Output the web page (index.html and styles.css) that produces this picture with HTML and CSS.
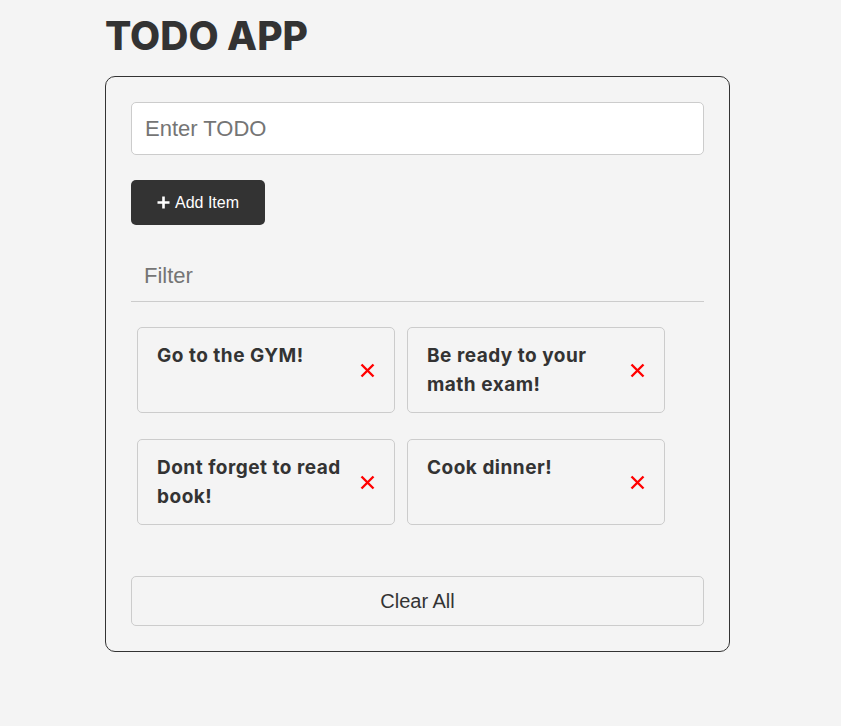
FILE: index.html
```html
<!DOCTYPE html>
<html lang="en">
<head>
<meta charset="UTF-8">
<title>Todo App</title>
<link rel="stylesheet" href="styles.css">
</head>
<body>
<div class="wrap">
  <h1 class="title">TODO APP</h1>
  <div class="panel">
    <input class="item-input" type="text" placeholder="Enter TODO">
    <button class="add-btn" type="button">
      <svg class="plus" viewBox="0 0 13 13" width="13" height="13"><path d="M6.5 0.5V12.5M0.5 6.5H12.5" stroke="#fff" stroke-width="2.6" fill="none"/></svg>
      <span>Add Item</span>
    </button>
    <input class="filter" type="text" placeholder="Filter">
    <ul class="items">
      <li class="item"><span class="item-text">Go to the GYM!</span><svg class="remove" viewBox="0 0 15 15" width="15" height="15"><path d="M1.5 1.5L13.5 13.5M13.5 1.5L1.5 13.5" stroke="#ff0000" stroke-width="2.4" fill="none"/></svg></li>
      <li class="item"><span class="item-text">Be ready to your math exam!</span><svg class="remove" viewBox="0 0 15 15" width="15" height="15"><path d="M1.5 1.5L13.5 13.5M13.5 1.5L1.5 13.5" stroke="#ff0000" stroke-width="2.4" fill="none"/></svg></li>
      <li class="item"><span class="item-text">Dont forget to read book!</span><svg class="remove" viewBox="0 0 15 15" width="15" height="15"><path d="M1.5 1.5L13.5 13.5M13.5 1.5L1.5 13.5" stroke="#ff0000" stroke-width="2.4" fill="none"/></svg></li>
      <li class="item"><span class="item-text">Cook dinner!</span><svg class="remove" viewBox="0 0 15 15" width="15" height="15"><path d="M1.5 1.5L13.5 13.5M13.5 1.5L1.5 13.5" stroke="#ff0000" stroke-width="2.4" fill="none"/></svg></li>
    </ul>
    <button class="clear-btn" type="button">Clear All</button>
  </div>
</div>
</body>
</html>
```
FILE: styles.css
```css
* { box-sizing: border-box; }
html, body { margin: 0; padding: 0; }
body {
  background: #f4f4f4;
  color: #333;
  font-family: "Liberation Sans", Arial, sans-serif;
}
.wrap {
  width: 625px;
  margin-left: 105px;
  padding-top: 14px;
}
.title {
  margin: 0 0 18px 0;
  font-family: Inter, "Noto Sans", sans-serif;
  font-weight: 800;
  font-size: 39px;
  line-height: 44px;
  color: #333;
  letter-spacing: 0px;
}
.panel {
  border: 1px solid #333;
  border-radius: 10px;
  padding: 25px;
  display: flex;
  flex-direction: column;
  align-items: flex-start;
}
.item-input {
  width: 100%;
  height: 53px;
  border: 1px solid #ccc;
  border-radius: 5px;
  background: #fff;
  font-family: "Liberation Sans", Arial, sans-serif;
  font-size: 22px;
  padding: 0 13px;
  color: #333;
  outline: none;
}
.item-input::placeholder, .filter::placeholder { color: #757575; }
.add-btn {
  margin-top: 25px;
  width: 134px;
  height: 45px;
  background: #333;
  color: #fff;
  border: none;
  border-radius: 5px;
  font-family: "Liberation Sans", Arial, sans-serif;
  font-size: 16px;
  display: flex;
  align-items: center;
  justify-content: center;
  gap: 5px;
  padding: 0;
}
.plus { display: block; }
.filter {
  margin-top: 25px;
  width: 100%;
  height: 52px;
  border: none;
  border-bottom: 1px solid #ccc;
  background: transparent;
  font-family: "Liberation Sans", Arial, sans-serif;
  font-size: 22px;
  padding: 0 13px;
  outline: none;
}
.items {
  list-style: none;
  margin: 19px 0 0 0;
  padding: 0;
  width: 100%;
  display: flex;
  flex-wrap: wrap;
}
.item {
  width: 258px;
  margin: 6px 6px 20px 6px;
  border: 1px solid #ccc;
  border-radius: 5px;
  padding: 13px 19px 13px 19px;
  display: flex;
  justify-content: space-between;
  align-items: center;
  gap: 10px;
  min-height: 86px;
}
.item-text {
  align-self: flex-start;
  font-family: Inter, "Noto Sans", sans-serif;
  font-weight: 700;
  font-size: 19px;
  line-height: 29px;
  letter-spacing: 0.5px;
  color: #333;
}
.remove { flex: none; display: block; }
.clear-btn {
  margin-top: 31px;
  width: 100%;
  height: 50px;
  border: 1px solid #ccc;
  border-radius: 5px;
  background: transparent;
  color: #333;
  font-family: "Liberation Sans", Arial, sans-serif;
  font-size: 20px;
}
```
